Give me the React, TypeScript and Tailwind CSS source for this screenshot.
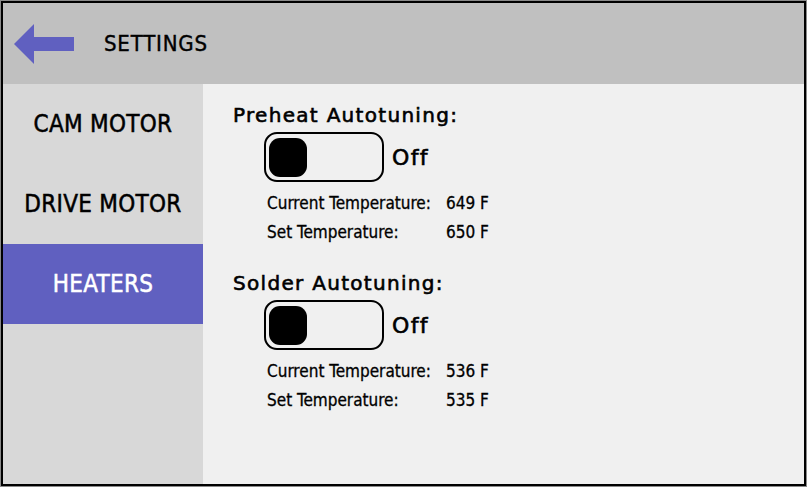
import { useState } from "react";

const cond = { fontFamily: '"DejaVu Sans Condensed", "DejaVu Sans", sans-serif' };
const wide = { fontFamily: '"DejaVu Sans", sans-serif' };

function Toggle({ on, onClick }: { on: boolean; onClick: () => void }) {
  return (
    <button
      onClick={onClick}
      className="flex h-[50px] w-[120px] items-center rounded-[13px] border-2 border-black px-[3px]"
    >
      <div className={`h-[39px] w-[38px] rounded-[11px] bg-black ${on ? "ml-auto" : ""}`} />
    </button>
  );
}

function Section({
  title,
  current,
  set,
}: {
  title: string;
  current: string;
  set: string;
}) {
  const [on, setOn] = useState(false);
  return (
    <div className="flex flex-col">
      <div
        className="h-[26px] pl-[30px] text-[20px] leading-[26px] tracking-[1.3px] text-black [-webkit-text-stroke-width:0.6px]"
        style={wide}
      >
        {title}
      </div>
      <div className="mt-[4px] flex items-center gap-[8px] pl-[61px]">
        <Toggle on={on} onClick={() => setOn(!on)} />
        <span className="text-[22px] tracking-[1.4px] text-black [-webkit-text-stroke-width:0.6px]" style={wide}>
          {on ? "On" : "Off"}
        </span>
      </div>
      <div className="mt-[7px] flex flex-col pl-[64px] text-[17px] text-black [-webkit-text-stroke-width:0.3px]">
        <div className="flex h-[29px] items-center">
          <span className="w-[179px]">Current Temperature:</span>
          <span>{current}</span>
        </div>
        <div className="flex h-[29px] items-center">
          <span className="w-[179px]">Set Temperature:</span>
          <span>{set}</span>
        </div>
      </div>
    </div>
  );
}

export default function App() {
  const [tab, setTab] = useState("HEATERS");
  const tabs = ["CAM MOTOR", "DRIVE MOTOR", "HEATERS"];

  return (
    <div className="h-[487px] w-[807px] border border-[#8a8a8a] bg-[#8a8a8a]" style={cond}>
      <div className="flex h-full w-full flex-col border-2 border-black">
        <div className="flex h-[81px] shrink-0 items-center bg-[#c0c0c0]">
          <svg width="60" height="40" viewBox="0 0 60 40" className="ml-[11px]">
            <polygon points="0,20 20,0 20,13 60,13 60,27 20,27 20,40" fill="#6060c0" />
          </svg>
          <span className="ml-[30px] text-[22px] tracking-[0.8px] text-black [-webkit-text-stroke-width:0.4px]">
            SETTINGS
          </span>
        </div>
        <div className="flex flex-1">
          <div className="flex w-[200px] flex-col bg-[#d8d8d8]">
            {tabs.map((t) => (
              <button
                key={t}
                onClick={() => setTab(t)}
                className={`flex h-[80px] items-center justify-center text-[24px] tracking-[0.3px] [-webkit-text-stroke-width:0.5px] ${
                  tab === t ? "bg-[#6060c0] text-white" : "text-black"
                }`}
              >
                {t}
              </button>
            ))}
          </div>
          <div className="flex flex-1 flex-col gap-[23px] bg-[#f0f0f0] pt-[18px]">
            <Section title="Preheat Autotuning:" current="649 F" set="650 F" />
            <Section title="Solder Autotuning:" current="536 F" set="535 F" />
          </div>
        </div>
      </div>
    </div>
  );
}
